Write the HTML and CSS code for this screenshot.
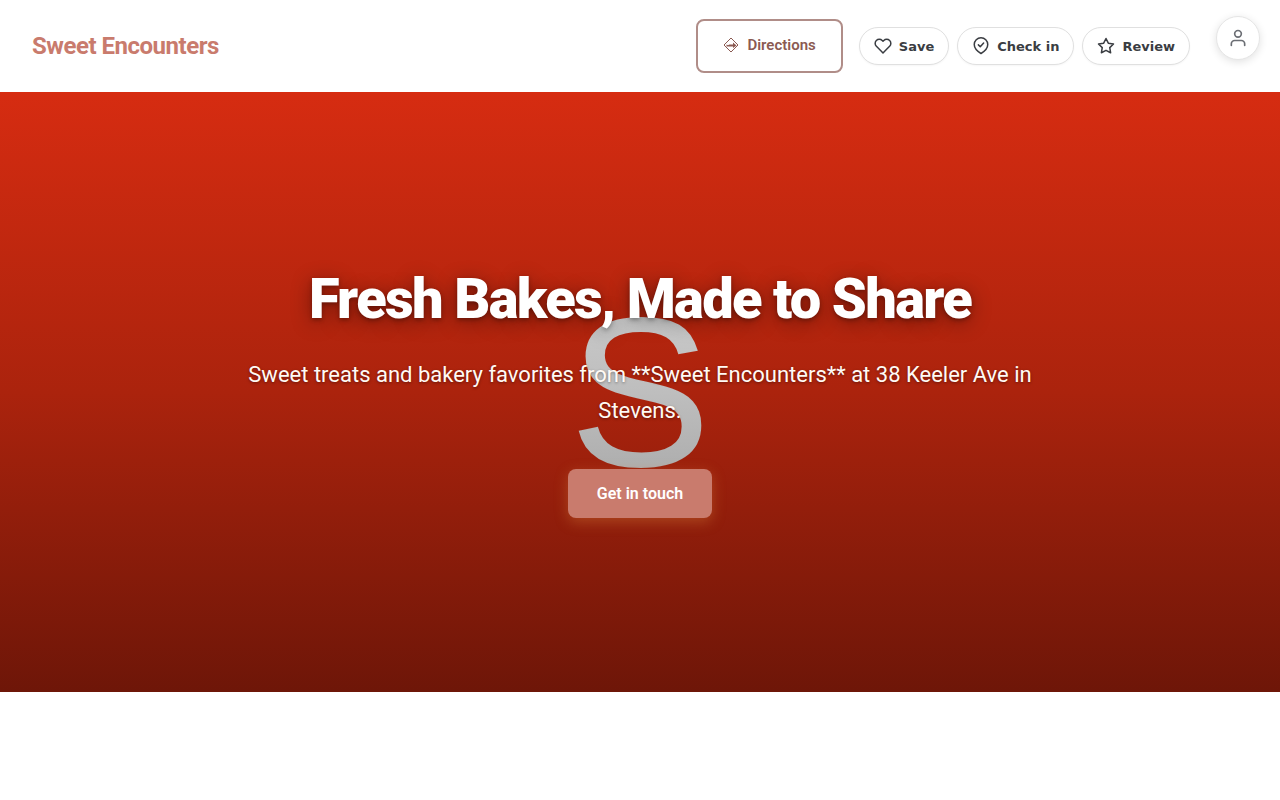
FILE: index.html
```html
<!DOCTYPE html>
<html lang="en">
<head>
  <meta charset="UTF-8" />
  <meta name="viewport" content="width=device-width, initial-scale=1.0"/>
  <title>Sweet Encounters</title>
  <link rel="stylesheet" href="styles.css">
</head>
<body>
  <header class="site-header">
    <a class="logo" href="#">Sweet Encounters</a>

    <nav class="actions">
      <a class="btn-directions" href="#">
        <svg width="16" height="16" viewBox="0 0 16 16" fill="none" stroke="currentColor" stroke-width="1" aria-hidden="true">
          <path d="M8 1L15 8L8 15L1 8Z"/>
          <path d="M3.500 7.500L5 8.200L6.500 7.500H10V5.500L13.500 8.500L10 11V9.500H3.500Z" fill="currentColor" stroke="none"/>
        </svg>
        Directions
      </a>

      <div class="pills">
        <button class="pill" type="button">
          <svg width="18" height="18" viewBox="0 0 24 24" aria-hidden="true">
            <path d="M20.84 4.61a5.5 5.5 0 0 0-7.78 0L12 5.67l-1.06-1.06a5.5 5.5 0 0 0-7.78 7.78l1.06 1.06L12 21.23l7.78-7.78 1.06-1.06a5.5 5.5 0 0 0 0-7.78z"/>
          </svg>
          Save
        </button>
        <button class="pill" type="button">
          <svg width="18" height="18" viewBox="0 0 24 24" aria-hidden="true">
            <path d="M12 22s9-5.500 9-12a9 9 0 0 0-18 0c0 6.500 9 12 9 12z"/>
            <path d="M8.500 10.500l2.500 2.500 4.500-5"/>
          </svg>
          Check in
        </button>
        <button class="pill" type="button">
          <svg width="18" height="18" viewBox="0 0 24 24" aria-hidden="true">
            <path d="M12 2l3.090 6.260L22 9.270l-5 4.870 1.180 6.880L12 17.770l-6.180 3.250L7 14.140 2 9.270l6.910-1.010L12 2z"/>
          </svg>
          Review
        </button>
      </div>
    </nav>
  </header>

  <button class="account" type="button" aria-label="Account">
    <svg width="20" height="20" viewBox="0 0 24 24" aria-hidden="true">
      <path d="M20 21v-2a4 4 0 0 0-4-4H8a4 4 0 0 0-4 4v2"/>
      <circle cx="12" cy="7" r="4"/>
    </svg>
  </button>

  <main>
    <section class="hero">
      <span class="hero-initial" aria-hidden="true">S</span>
      <div class="hero-content">
        <h1>Fresh Bakes, Made to Share</h1>
        <p>Sweet treats and bakery favorites from **Sweet Encounters** at 38 Keeler Ave in Stevens.</p>
        <a class="btn-primary" href="#">Get in touch</a>
      </div>
    </section>
  </main>
</body>
</html>
```
FILE: styles.css
```css
* {
  box-sizing: border-box;
}

body {
  margin: 0;
  font-family: Roboto, sans-serif;
  background-color: #fff;
}

a {
  text-decoration: none;
}

.site-header {
  display: flex;
  justify-content: space-between;
  align-items: center;
  min-height: 92px;
  padding: 0 90px 0 32px;
}

.logo {
  color: #c97b6d;
  font-size: 24px;
  font-weight: 700;
  letter-spacing: -0.02em;
}

.actions {
  display: flex;
  align-items: center;
  gap: 16px;
}

.btn-directions {
  display: flex;
  align-items: center;
  gap: 8px;
  padding: 15px 25px 17px;
  border: 2px solid #b08d88;
  border-radius: 8px;
  color: #8b5a52;
  font-size: 15px;
  font-weight: 600;
  line-height: 18px;
}

.pills {
  display: flex;
  gap: 8px;
}

.pill {
  display: flex;
  align-items: center;
  gap: 7px;
  height: 38px;
  padding: 0 14px;
  border: 1px solid #e0e0e0;
  border-radius: 19px;
  background-color: #fff;
  color: #3a3d42;
  font-family: "DejaVu Sans", sans-serif;
  font-size: 13px;
  font-weight: 600;
  box-shadow: 0 1px 2px rgba(0, 0, 0, 0.04);
  cursor: pointer;
}

.pill svg,
.account svg {
  fill: none;
  stroke: currentColor;
  stroke-width: 2;
  stroke-linecap: round;
  stroke-linejoin: round;
}

/* floats over the page */
.account {
  position: fixed;
  top: 16px;
  right: 20px;
  z-index: 10;
  display: flex;
  align-items: center;
  justify-content: center;
  width: 44px;
  height: 44px;
  padding: 0;
  border: 1px solid #e5e5e5;
  border-radius: 50%;
  background-color: #fff;
  color: #6b6e74;
  box-shadow: 0 2px 8px rgba(0, 0, 0, 0.12);
  cursor: pointer;
}

.hero {
  position: relative;
  display: flex;
  align-items: center;
  justify-content: center;
  min-height: 600px;
  padding: 64px 32px;
  background: linear-gradient(#d62c11, #ab230d 50%, #6e1608);
  overflow: hidden;
}

/* big initial behind the copy */
.hero-initial {
  position: absolute;
  inset: 0;
  display: flex;
  align-items: center;
  justify-content: center;
  color: transparent;
  background: linear-gradient(#e6e6e6, #bebebe 50%, #808080);
  background-clip: text;
  font-family: "Liberation Sans", sans-serif;
  font-size: 213px;
  line-height: normal;
}

.hero-content {
  position: relative;
  max-width: 800px;
  text-align: center;
  color: #fff;
}

.hero h1 {
  margin: 0 0 24px;
  font-size: 56px;
  font-weight: 900;
  line-height: 67px;
  letter-spacing: -0.03em;
  text-shadow: 0 2px 4px rgba(0, 0, 0, 0.3), 0 4px 20px rgba(0, 0, 0, 0.4);
}

.hero p {
  margin: 0 0 40px;
  color: #fffaf5;
  font-size: 22px;
  line-height: 36px;
  text-shadow: 0 1px 3px rgba(0, 0, 0, 0.4);
}

.btn-primary {
  display: inline-block;
  padding: 15px 29px;
  border-radius: 8px;
  background-color: #c97b6d;
  color: #fff;
  font-size: 16px;
  font-weight: 600;
  line-height: 19px;
  box-shadow: 0 4px 14px rgba(212, 130, 60, 0.4);
}
```
